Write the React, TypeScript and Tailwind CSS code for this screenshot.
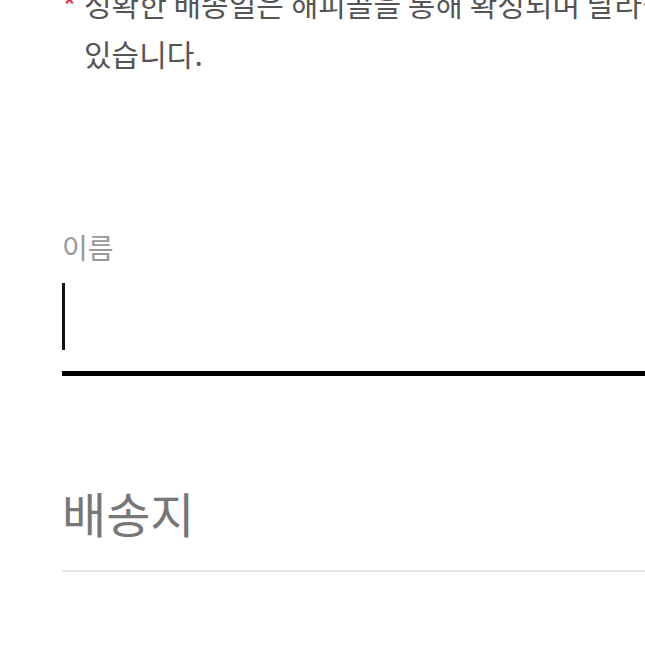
import React from "react";

export default function App() {
  return (
    <div className="w-[645px] h-[645px] overflow-hidden bg-white" style={{ fontFamily: '"Noto Sans CJK KR", "Noto Sans", sans-serif' }}>
      <div className="w-[900px] pl-[62px]">
        <div className="flex mt-[-22px]">
          <span className="w-[22px] shrink-0 text-[32px] leading-[54px] text-[#e0303a]">*</span>
          <p className="w-[690px] break-keep text-[30px] leading-[50px] text-[#555555]">
            정확한 배송일은 해피콜을 통해 확정되며 달라질 수 있습니다.
          </p>
        </div>
        <div className="mt-[151px] text-[28px] leading-[36px] text-[#999999]">이름</div>
        <div className="pt-[18px] pb-[21px] border-b-[5px] border-black">
          <div className="w-[3px] h-[67px] bg-[#111111]" />
        </div>
        <h2 className="mt-[107px] text-[48px] leading-[58px] text-[#777777] font-normal">배송지</h2>
        <div className="mt-[29px] h-[2px] bg-[#e2e2e2]" />
      </div>
    </div>
  );
}
